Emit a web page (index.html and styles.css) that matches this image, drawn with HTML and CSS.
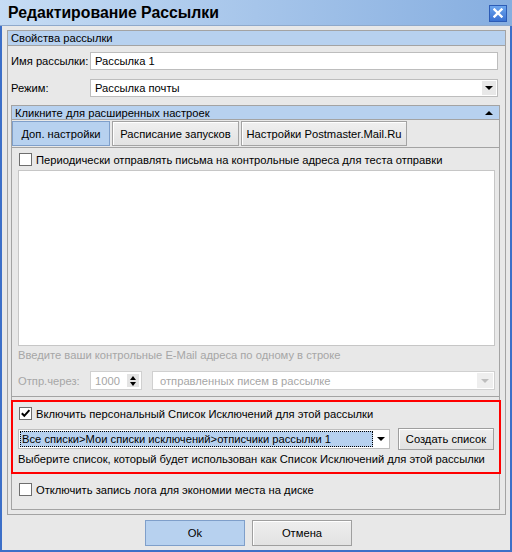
FILE: index.html
```html
<!DOCTYPE html>
<html lang="ru">
<head>
    <meta charset="UTF-8">
    <title>Редактирование Рассылки</title>
    <link rel="stylesheet" href="styles.css">
</head>
<body>

<div class="window">
    <div class="titlebar">
        <span class="title">Редактирование Рассылки</span>
        <span class="close">
            <svg width="10" height="10" viewBox="0 0 10 10"><path d="M1.5 1.5 L8.5 8.5 M8.5 1.5 L1.5 8.5" stroke="#fff" stroke-width="2.4" stroke-linecap="square"/></svg>
        </span>
    </div>

    <div class="client">
        <div class="group outer">
            <div class="group-head">Свойства рассылки</div>

            <div class="row">
                <label>Имя рассылки:</label>
                <div class="field">Рассылка 1</div>
            </div>
            <div class="row">
                <label>Режим:</label>
                <div class="field select">Рассылка почты<span class="arrow"><i class="tri"></i></span></div>
            </div>

            <div class="group inner">
                <div class="group-head">Кликните для расширенных настроек<i class="tri up"></i></div>

                <div class="tabs">
                    <div class="tab active tab-1">Доп. настройки</div>
                    <div class="tab tab-2">Расписание запусков</div>
                    <div class="tab tab-3">Настройки Postmaster.Mail.Ru</div>
                </div>

                <div class="tab-panel">
                    <div class="check-row">
                        <span class="checkbox"></span>
                        <span>Периодически отправлять письма на контрольные адреса для теста отправки</span>
                    </div>
                    <div class="textarea"></div>
                    <div class="hint">Введите ваши контрольные E-Mail адреса по одному в строке</div>
                    <div class="send-row">
                        <label>Отпр.через:</label>
                        <div class="field spinner">1000
                            <span class="spin"><i class="tri up"></i><i class="tri"></i></span>
                        </div>
                        <div class="field select disabled">отправленных писем в рассылке<span class="arrow"><i class="tri"></i></span></div>
                    </div>
                </div>

                <div class="exclusions">
                    <div class="check-row">
                        <span class="checkbox">
                            <svg width="11" height="11" viewBox="0 0 11 11"><path d="M1.8 5.2 L4.3 7.8 L9.4 2.2" fill="none" stroke="#000" stroke-width="2"/></svg>
                        </span>
                        <span>Включить персональный Список Исключений для этой рассылки</span>
                    </div>
                    <div class="list-row">
                        <div class="field select list">
                            <span class="picked">Все списки&gt;Мои списки исключений&gt;отписчики рассылки 1</span>
                            <span class="arrow"><i class="tri"></i></span>
                        </div>
                        <button class="btn create">Создать список</button>
                    </div>
                    <div class="note">Выберите список, который будет использован как Список Исключений для этой рассылки</div>
                </div>

                <div class="check-row log">
                    <span class="checkbox"></span>
                    <span>Отключить запись лога для экономии места на диске</span>
                </div>
            </div>
        </div>

        <div class="buttons">
            <button class="btn primary">Ok</button>
            <button class="btn">Отмена</button>
        </div>
    </div>
</div>

</body>
</html>
```

FILE: styles.css
```css
* {
    box-sizing: border-box;
}

body {
    margin: 0;
    font-family: 'Liberation Sans', Arial, sans-serif;
    font-size: 11.2px;
    color: #000;
    background: #e8e8e8;
    white-space: nowrap;
}

.window {
    width: 512px;
    height: 552px;
    display: flex;
    flex-direction: column;
    background: #e8e8e8;
}

.titlebar {
    height: 26px;
    background: linear-gradient(to right, #c6dcf4, #86aee0);
    border-bottom: 1px solid #8fa9cb;
    display: flex;
    align-items: center;
    justify-content: space-between;
    padding: 0 5px 0 8px;
}

.title {
    font-weight: bold;
    font-size: 15.8px;
}

.close {
    width: 18px;
    height: 17px;
    margin-top: 1px;
    border: 1px solid #2c5cb6;
    background: linear-gradient(#6da6ee, #3a72d2);
    display: flex;
    align-items: center;
    justify-content: center;
}

.client {
    flex: 1;
    border: 2px solid #3c6fc8;
    border-top: 0;
    padding: 4px 4px 0 5px;
}

/* group boxes */
.group {
    border: 1px solid #a3a3a3;
}

.group-head {
    height: 15px;
    line-height: 14px;
    padding-left: 3px;
    background: #b7d1ef;
    border-bottom: 1px solid #a3a3a3;
    display: flex;
    align-items: center;
    justify-content: space-between;
}

.outer {
    height: 485px;
}

.inner {
    height: 405px;
    margin: 8px 5px 0 3px;
}

.inner .group-head {
    height: 14px;
    padding-right: 6px;
}

.row {
    display: flex;
    align-items: center;
    margin: 6px 7px 0 3px;
}

.row + .row {
    margin-top: 9px;
}

.row label {
    width: 79px;
    flex-shrink: 0;
}

/* inputs */
.field {
    height: 18px;
    background: #fff;
    border: 1px solid #bdbdbd;
    display: flex;
    align-items: center;
    padding-left: 4px;
    position: relative;
}

.row .field {
    flex: 1;
}

.select .arrow {
    position: absolute;
    right: 1px;
    top: 1px;
    bottom: 1px;
    width: 14px;
    background: #e8e8e8;
    display: flex;
    align-items: center;
    justify-content: center;
}

.tri {
    display: block;
    width: 0;
    height: 0;
    border-left: 4px solid transparent;
    border-right: 4px solid transparent;
    border-top: 4px solid #000;
}

.tri.up {
    border-top: 0;
    border-bottom: 4px solid #000;
}

/* tabs */
.tabs {
    display: flex;
    gap: 2px;
    padding-top: 1px;
}

.tab {
    height: 25px;
    border: 1px solid #a3a3a3;
    background: linear-gradient(#f0f0f0, #e2e2e2);
    box-shadow: inset 1px 1px 0 #fff;
    display: flex;
    align-items: center;
    justify-content: center;
}

.tab.active {
    background: #b7d1ef;
    border-color: #7f9fca;
    box-shadow: none;
}

.tab-1 { width: 98px; }
.tab-2 { width: 127px; }
.tab-3 { width: 166px; }

.tab-panel {
    height: 250px;
    margin-top: 1px;
    border-top: 1px solid #a3a3a3;
    border-bottom: 1px solid #a3a3a3;
    padding: 5px 4px 0 6px;
}

.check-row {
    display: flex;
    align-items: center;
    gap: 4px;
    height: 13px;
}

.checkbox {
    width: 13px;
    height: 13px;
    flex-shrink: 0;
    margin-left: 1px;
    border: 1px solid #6e6e6e;
    background: #fff;
    display: flex;
    align-items: center;
    justify-content: center;
}

.textarea {
    height: 176px;
    margin-top: 4px;
    background: #fff;
    border: 1px solid #c6c6c6;
}

.hint {
    height: 14px;
    margin-top: 2px;
    line-height: 14px;
    color: #a6a6a6;
}

.send-row {
    display: flex;
    align-items: center;
    margin-top: 9px;
    color: #a6a6a6;
}

.send-row label {
    width: 72px;
    flex-shrink: 0;
}

.send-row .field {
    height: 19px;
    border-color: #d0d0d0;
}

.spinner {
    width: 52px;
}

.spin {
    position: absolute;
    right: 2px;
    top: 2px;
    bottom: 2px;
    width: 12px;
    background: #e4e4e4;
    display: flex;
    flex-direction: column;
    align-items: center;
    justify-content: center;
    gap: 2px;
}

.spin .tri {
    border-left-width: 3px;
    border-right-width: 3px;
}

.disabled {
    flex: 1;
    margin-left: 10px;
    padding-left: 7px;
}

.disabled .arrow {
    width: 16px;
    background: #eeeeee;
}

.disabled .tri {
    border-top-color: #bdbdbd;
}

/* exclusion list, red frame */
.exclusions {
    height: 74px;
    margin: 3px -2px 0 -1px;
    border: 2px solid #f00;
    padding: 5px 0 0 5px;
}

.list-row {
    display: flex;
    align-items: center;
    gap: 8px;
    height: 22px;
    margin-top: 8px;
}

.list {
    width: 372px;
    height: 20px;
    padding: 1px;
}

.list .picked {
    height: 16px;
    width: 353px;
    background: #b7d1ef;
    outline: 1px dotted #000;
    outline-offset: -1px;
    padding-left: 2px;
    line-height: 16px;
}

.list .arrow {
    background: #fff;
}

.note {
    height: 14px;
    margin-top: 2px;
    line-height: 14px;
}

.log {
    margin: 9px 0 0 6px;
}

/* buttons */
.btn {
    font: inherit;
    color: #000;
    height: 26px;
    border: 1px solid #9f9f9f;
    background: linear-gradient(#eeeeee, #e2e2e2);
    box-shadow: inset 1px 1px 0 #fff;
    padding: 0;
}

.create {
    width: 96px;
    height: 22px;
}

.buttons {
    display: flex;
    gap: 7px;
    margin-top: 5px;
    padding-left: 138px;
}

.buttons .btn {
    width: 100px;
}

.btn.primary {
    background: #b7d1ef;
    border-color: #7f9fca;
    box-shadow: none;
}
```
